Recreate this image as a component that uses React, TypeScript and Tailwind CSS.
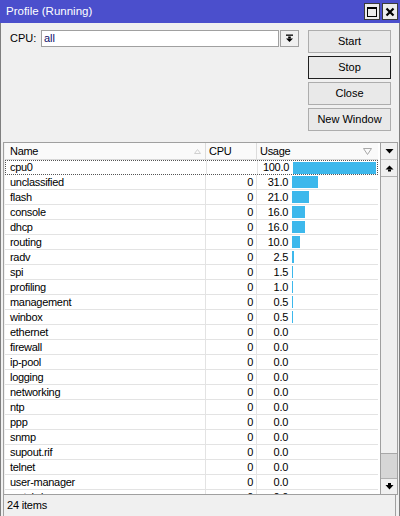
import React from 'react'

type Row = { name: string; cpu: string; usage: number }

// only the rows that fit in the list box (the 23rd is cut by the bottom edge)
const rows: Row[] = [
  { name: 'cpu0', cpu: '', usage: 100 },
  { name: 'unclassified', cpu: '0', usage: 31 },
  { name: 'flash', cpu: '0', usage: 21 },
  { name: 'console', cpu: '0', usage: 16 },
  { name: 'dhcp', cpu: '0', usage: 16 },
  { name: 'routing', cpu: '0', usage: 10 },
  { name: 'radv', cpu: '0', usage: 2.5 },
  { name: 'spi', cpu: '0', usage: 1.5 },
  { name: 'profiling', cpu: '0', usage: 1 },
  { name: 'management', cpu: '0', usage: 0.5 },
  { name: 'winbox', cpu: '0', usage: 0.5 },
  { name: 'ethernet', cpu: '0', usage: 0 },
  { name: 'firewall', cpu: '0', usage: 0 },
  { name: 'ip-pool', cpu: '0', usage: 0 },
  { name: 'logging', cpu: '0', usage: 0 },
  { name: 'networking', cpu: '0', usage: 0 },
  { name: 'ntp', cpu: '0', usage: 0 },
  { name: 'ppp', cpu: '0', usage: 0 },
  { name: 'snmp', cpu: '0', usage: 0 },
  { name: 'supout.rif', cpu: '0', usage: 0 },
  { name: 'telnet', cpu: '0', usage: 0 },
  { name: 'user-manager', cpu: '0', usage: 0 },
  { name: 'watchdog', cpu: '0', usage: 0 },
]

const BAR_MAX = 83

function WinButton({ label, focused }: { label: string; focused?: boolean }) {
  return (
    <button
      className={
        'h-[23px] w-[83px] bg-[#e9e9e9] text-[11px] text-black flex items-center justify-center ' +
        (focused ? 'border border-[#202020]' : 'border border-[#adadad]')
      }
    >
      {label}
    </button>
  )
}

function ArrowDown({ stem }: { stem?: boolean }) {
  return (
    <svg width="9" height="7" viewBox="0 0 9 7">
      {stem && <rect x="3" y="0" width="3" height="2" fill="#000" />}
      <polygon points={stem ? '0.5,2 8.5,2 4.5,6.5' : '0.5,1 8.5,1 4.5,5.5'} fill="#000" />
    </svg>
  )
}

function ArrowUp() {
  return (
    <svg width="9" height="7" viewBox="0 0 9 7">
      <polygon points="0.5,4.5 8.5,4.5 4.5,0.5" fill="#000" />
      <rect x="3" y="4.5" width="3" height="2" fill="#000" />
    </svg>
  )
}

export default function App() {
  return (
    <div
      className="w-[400px] h-[516px] bg-[#f0f0f0] flex flex-col overflow-hidden text-black"
      style={{ fontFamily: '"Liberation Sans", Arial, sans-serif' }}
    >
      {/* Title bar */}
      <div className="h-[23px] bg-[#4b4fcc] flex items-center pl-[6px] pr-[2px] shrink-0">
        <span className="text-white text-[11.5px] flex-1">Profile (Running)</span>
        <div className="flex gap-[2px]">
          <div className="w-[16px] h-[17px] bg-[#ececec] border border-[#3a3a3a] flex items-center justify-center">
            <div className="w-[10px] h-[10px] border border-black border-t-2" />
          </div>
          <div className="w-[16px] h-[17px] bg-[#ececec] border border-[#3a3a3a] flex items-center justify-center">
            <svg width="10" height="10" viewBox="0 0 10 10">
              <path d="M1.5 1.5 L8.5 8.5 M8.5 1.5 L1.5 8.5" stroke="#000" strokeWidth="2.2" />
            </svg>
          </div>
        </div>
      </div>

      {/* Body */}
      <div className="flex-1 flex flex-col border-x border-[#7f7f7f] min-h-0">
        {/* Controls */}
        <div className="h-[119px] shrink-0 flex pt-[7px]">
          <div className="flex items-start pl-[9px] w-[306px]">
            <span className="text-[11px] leading-[17px] w-[31px]">CPU:</span>
            <div className="w-[238px] h-[17px] bg-white border border-[#a0a0a0] flex items-center pl-[2px]">
              <span className="text-[11px] text-[#10106a]">all</span>
            </div>
            <div className="w-[19px] h-[17px] ml-[1px] bg-[#f0f0f0] border border-[#a0a0a0] flex items-center justify-center">
              <svg width="9" height="9" viewBox="0 0 9 9">
                <rect x="1" y="0.5" width="7" height="1.3" fill="#000" />
                <rect x="3.2" y="2.5" width="2.6" height="2" fill="#000" />
                <polygon points="1,4.5 8,4.5 4.5,8" fill="#000" />
              </svg>
            </div>
          </div>
          <div className="flex flex-col gap-[3px] ml-[1px]">
            <WinButton label="Start" />
            <WinButton label="Stop" focused />
            <WinButton label="Close" />
            <WinButton label="New Window" />
          </div>
        </div>

        {/* Table */}
        <div className="ml-[2px] mr-[1px] h-[353px] shrink-0 border border-[#a0a0a0] bg-white flex overflow-hidden">
          <div className="w-[1px] bg-[#f0f0f0]" />
          <div className="w-[373px] flex flex-col overflow-hidden text-[11px] tracking-[-0.3px]">
            {/* Header */}
            <div className="h-[17px] shrink-0 flex border-b border-[#d8d8d8] bg-[#fafafa]">
              <div className="w-[201px] flex items-center pl-[5px] pr-[4px] border-r border-[#dcdcdc]">
                <span className="flex-1">Name</span>
                <svg width="7" height="5" viewBox="0 0 7 5">
                  <polygon points="0.5,4.5 6.5,4.5 3.5,0.5" fill="none" stroke="#d0d0d0" />
                </svg>
              </div>
              <div className="w-[51px] flex items-center pl-[3px] border-r border-[#dcdcdc]">CPU</div>
              <div className="w-[121px] flex items-center pl-[3px] pr-[6px]">
                <span className="flex-1">Usage</span>
                <svg width="9" height="7" viewBox="0 0 9 7">
                  <polygon points="0.5,0.5 8.5,0.5 4.5,6.5" fill="none" stroke="#a8a8a8" />
                </svg>
              </div>
            </div>
            {/* Rows */}
            {rows.map((r, i) => {
              const bar = r.usage > 0 ? Math.max(1, Math.round((BAR_MAX * r.usage) / 100)) : 0
              return (
                <div
                  key={r.name}
                  className={
                    'h-[15px] shrink-0 flex ' +
                    (i === 0 ? 'border border-dotted border-[#555]' : 'border-b border-[#e3e3e3]')
                  }
                >
                  <div className={'w-[201px] flex items-center border-r border-[#e3e3e3] ' + (i === 0 ? 'pl-[4px]' : 'pl-[5px]')}>
                    {r.name}
                  </div>
                  <div className="w-[51px] flex items-center justify-end pr-[3px] border-r border-[#e3e3e3]">{r.cpu}</div>
                  <div className="flex items-center">
                    <span className="w-[31px] text-right">{r.usage.toFixed(1)}</span>
                    {bar > 0 && <div className="ml-[4px] h-[12px] bg-[#3db8ec]" style={{ width: bar }} />}
                  </div>
                </div>
              )
            })}
          </div>
          <div className="w-[2px]" />
          {/* Scrollbar */}
          <div className="w-[17px] flex flex-col border-l border-[#a0a0a0] bg-[#f0f0f0]">
            <div className="h-[17px] shrink-0 flex items-center justify-center border-b border-[#c8c8c8]">
              <ArrowDown />
            </div>
            <div className="h-[17px] shrink-0 flex items-center justify-center border-b border-[#b0b0b0]">
              <ArrowUp />
            </div>
            <div className="h-[277px] shrink-0 border-b border-[#a8a8a8] bg-[#f0f0f0]" />
            <div className="flex-1 bg-[#d6d6d6] border-b border-[#b0b0b0]" />
            <div className="h-[15px] shrink-0 flex items-center justify-center">
              <ArrowDown stem />
            </div>
          </div>
        </div>

        {/* Status bar */}
        <div className="flex-1 ml-[2px] mr-[3px] border-x border-[#a0a0a0] flex items-center pl-[3px]">
          <span className="text-[11px] tracking-[-0.2px]">24 items</span>
        </div>
      </div>
    </div>
  )
}
